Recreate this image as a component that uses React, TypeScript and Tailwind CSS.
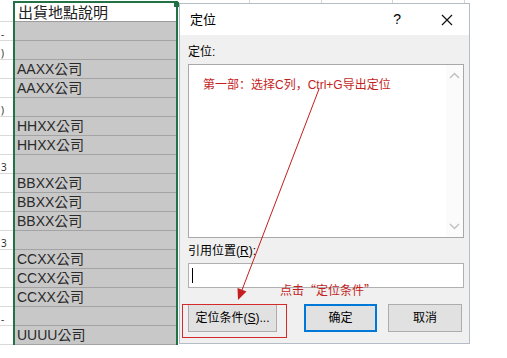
import React from 'react';

const rows = [
  '', '', 'AAXX公司', 'AAXX公司', '', 'HHXX公司', 'HHXX公司', '',
  'BBXX公司', 'BBXX公司', 'BBXX公司', '', 'CCXX公司', 'CCXX公司', 'CCXX公司', '', 'UUUU公司',
];

// clipped row-number fragments peeking in from column B
const stubs: Record<number, string> = { 0: '-', 1: ')', 4: ')', 7: '3', 11: '3', 15: '-' };

const LeftStrip = () => (
  <div className="w-[13px] shrink-0 pt-[3px] overflow-hidden">
    <div className="h-[19px] border-b border-[#d9d9d9]" />
    {rows.map((_, i) => (
      <div key={i} className="h-[19px] border-b border-[#d9d9d9] flex items-end pb-[1px] text-[10px] leading-none text-[#333] pl-[1px]">
        {stubs[i] ?? ''}
      </div>
    ))}
  </div>
);

const ColumnC = () => (
  <div className="relative w-[165px] h-[344px] shrink-0 mt-[1px] border-x-2 border-t-2 border-[#217346]">
    <div className="absolute -top-[1px] -right-[3px] w-[5px] h-[5px] bg-[#217346]" />
    <div className="h-[19px] bg-white border-b border-[#9b9b9b] pl-[3px] text-[15px] leading-[18px] text-[#222] font-['Noto_Sans_CJK_TC',sans-serif]">
      出貨地點說明
    </div>
    {rows.map((r, i) => (
      <div key={i} className="h-[19px] bg-[#c8c8c8] border-b border-[#a3a3a3] pl-[2px] text-[14px] leading-[18px] text-[#2a2a2a] font-['Liberation_Sans','Noto_Sans_CJK_TC',sans-serif]">
        {r}
      </div>
    ))}
  </div>
);

const Chevron = ({ up }: { up?: boolean }) => (
  <svg width="11" height="7" viewBox="0 0 11 7">
    <path d={up ? 'M1 6 L5.5 1.5 L10 6' : 'M1 1 L5.5 5.5 L10 1'} fill="none" stroke="#c2c2c2" strokeWidth="1.5" />
  </svg>
);

const Dialog = () => (
  <div className="ml-[1px] mt-[3px] w-[291px] h-[341px] border border-[#b4bcc6] bg-[#f0f0f0] flex flex-col text-[12px] text-black font-['Liberation_Sans','Noto_Sans_CJK_SC',sans-serif]">
    <div className="h-[31px] bg-white flex items-center pl-[10px] shrink-0">
      <span className="text-[13px]">定位</span>
      <span className="ml-auto mr-[40px] text-[14px]">?</span>
      <svg width="12" height="12" viewBox="0 0 12 12" className="mr-[16px]">
        <path d="M1 1 L11 11 M11 1 L1 11" stroke="#111" strokeWidth="1.2" />
      </svg>
    </div>
    <div className="flex flex-col pl-[8px] pr-[5px]">
      <div className="mt-[9px] leading-[16px]">定位:</div>
      <div className="mt-[4px] h-[174px] border border-[#a8a8a8] bg-white flex">
        <div className="flex-1 pl-[14px] pt-[12px] leading-[16px] text-[#c41e1e]">
          第一部：选择C列，Ctrl+G导出定位
        </div>
        <div className="w-[17px] bg-[#fbfbfb] flex flex-col items-center justify-between py-[7px]">
          <Chevron up />
          <Chevron />
        </div>
      </div>
      <div className="mt-[5px] leading-[16px]">
        引用位置(<span className="underline">R</span>):
      </div>
      <div className="mt-[4px] h-[25px] border border-[#b0b0b0] bg-white flex items-center pl-[3px]">
        <div className="w-[1px] h-[15px] bg-black" />
      </div>
      <div className="mt-[16px] flex">
        <button className="w-[89px] h-[28px] bg-[#e1e1e1] border border-[#adadad]">
          定位条件(<span className="underline">S</span>)...
        </button>
        <button className="ml-[27px] w-[73px] h-[28px] bg-[#e1e1e1] border-2 border-[#0078d7]">确定</button>
        <button className="ml-[11px] w-[74px] h-[28px] bg-[#e1e1e1] border border-[#adadad]">取消</button>
      </div>
    </div>
  </div>
);

export default function App() {
  return (
    <div className="relative w-[507px] h-[358px] bg-white overflow-hidden flex">
      <LeftStrip />
      <ColumnC />
      <div className="relative flex-1">
        {/* sheet grid peeking above the dialog */}
        <div className="absolute top-0 left-[71px] w-[1px] h-[3px] bg-[#d4d4d4]" />
        <div className="absolute top-0 left-[143px] w-[1px] h-[3px] bg-[#d4d4d4]" />
        <div className="absolute top-0 left-[214px] w-[1px] h-[3px] bg-[#d4d4d4]" />
        <div className="absolute top-0 left-[286px] w-[1px] h-[3px] bg-[#d4d4d4]" />
        <Dialog />
      </div>

      {/* annotations */}
      <div className="absolute left-[182px] top-[304px] w-[105px] h-[34px] border border-[#d42a2a]" />
      <div className="absolute left-[280px] top-[282px] text-[12px] leading-[16px] text-[#c41e1e] font-['Noto_Sans_CJK_SC',sans-serif]">
        点击“定位条件”
      </div>
      <svg className="absolute inset-0 pointer-events-none" width="507" height="358">
        <line x1="319" y1="89" x2="242" y2="290" stroke="#c41e1e" strokeWidth="1" />
        <polygon points="238,300 246.5,291.5 237.5,288" fill="#c41e1e" />
      </svg>
    </div>
  );
}
